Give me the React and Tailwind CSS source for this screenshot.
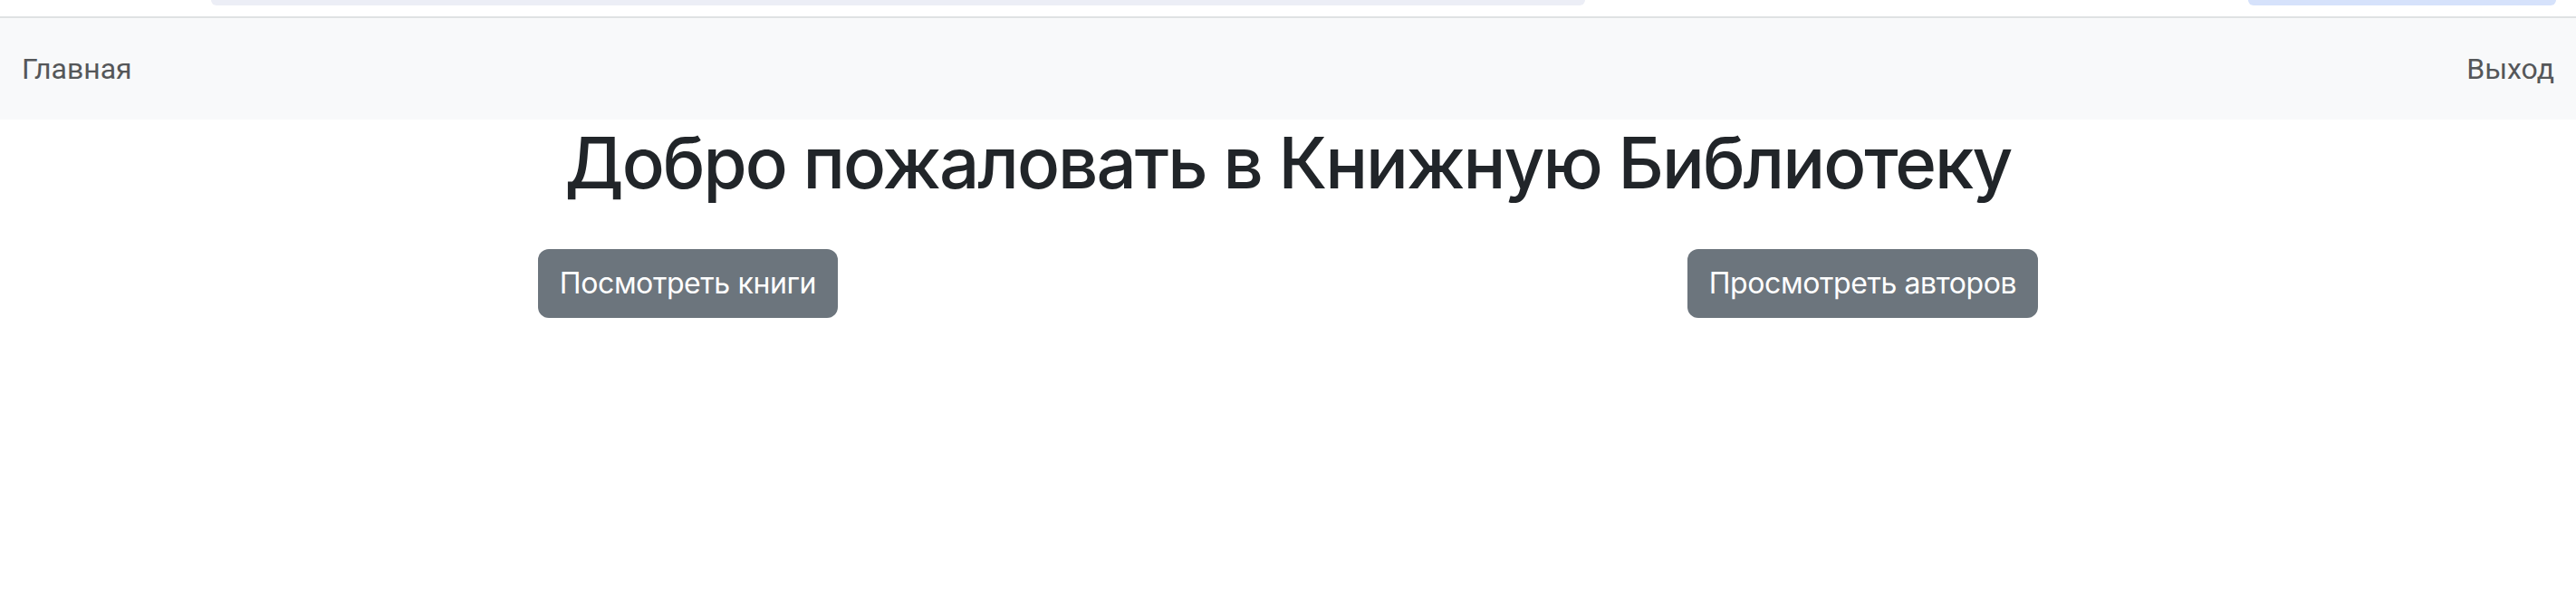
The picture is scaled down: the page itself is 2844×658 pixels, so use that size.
import React from 'react';

const App = () => {
    const buttons = [
        { id: 1, label: 'Посмотреть книги' },
        { id: 2, label: 'Просмотреть авторов' },
    ];

    return (
        <div className="min-h-[658px] bg-white font-['Inter',sans-serif] text-[#212529]">
            {/* leftover browser strip */}
            <div className="h-[18px] flex items-start">
                <div className="ml-[233px] w-[1517px] h-[6px] bg-[#eceef6] rounded-b-[10px]"></div>
                <div className="ml-auto mr-[22px] w-[340px] h-[6px] bg-[#d6e2fb] rounded-b-[10px]"></div>
            </div>
            <div className="h-[2px] bg-[#dfe2e3]"></div>

            <nav className="bg-[#f8f9fa] h-[112px] px-[24px] flex items-center justify-between font-['Roboto',sans-serif]">
                <a className="text-[32px] leading-[48px] text-[#555759]">Главная</a>
                <a className="text-[32px] leading-[48px] text-[#555759]">Выход</a>
            </nav>

            <h1 className="text-center text-[78px] leading-[96px] font-medium tracking-[-2px]">
                Добро пожаловать в Книжную Библиотеку
            </h1>

            <div className="mt-[47px] px-[125px] flex justify-around">
                {buttons.map((b) => (
                    <button
                        key={b.id}
                        className="bg-[#6c757d] text-white text-[32px] leading-[48px] tracking-[-0.4px] px-[24px] py-[14px] rounded-[12px]"
                    >
                        {b.label}
                    </button>
                ))}
            </div>
        </div>
    );
};

export default App;
